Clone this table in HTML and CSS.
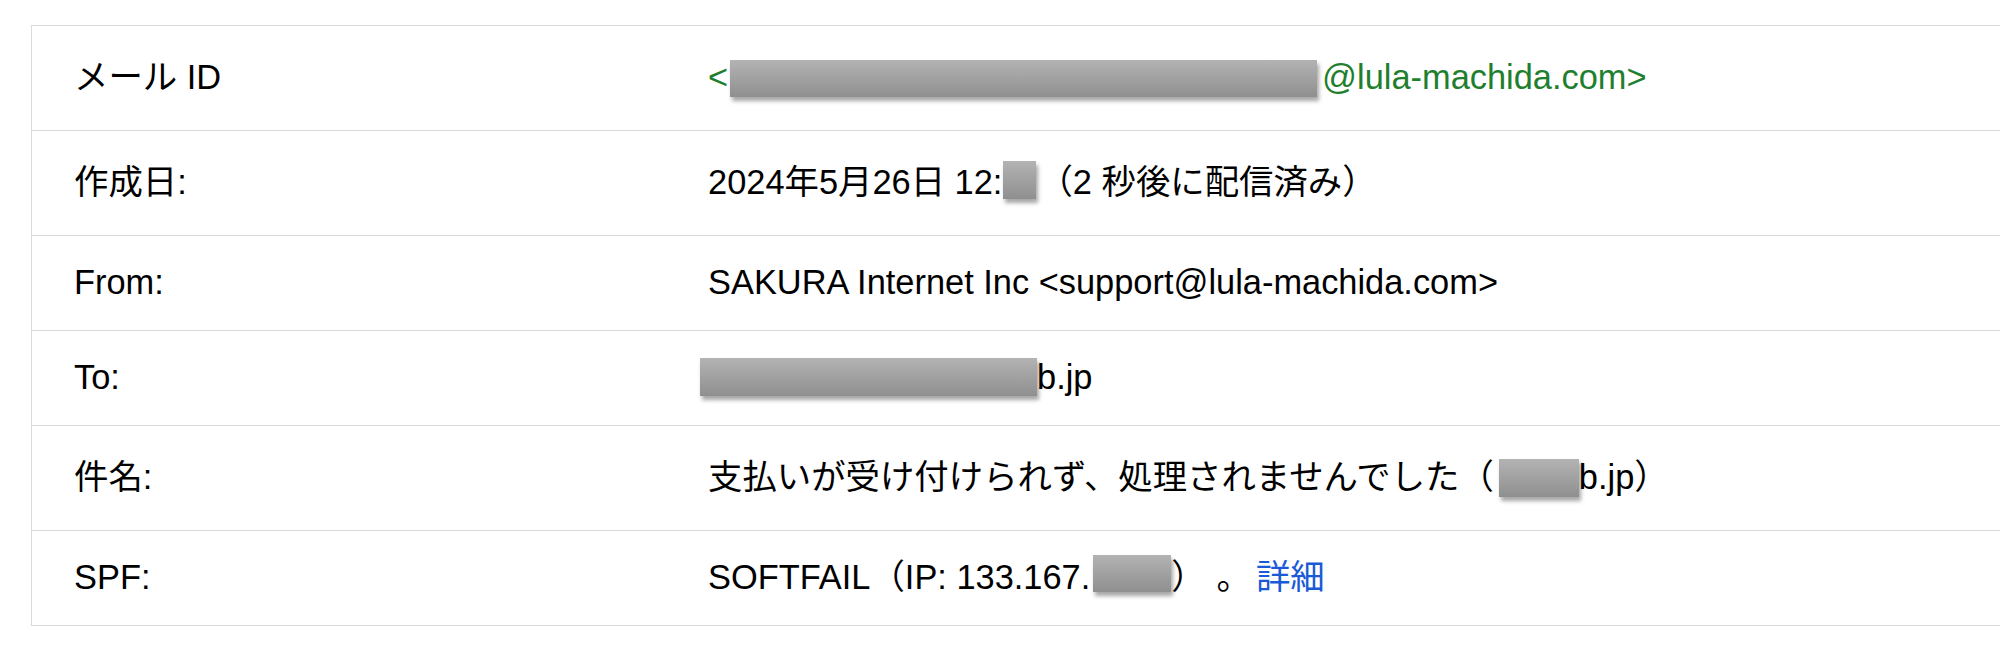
FILE: index.html
```html
<!DOCTYPE html>
<html lang="ja">
<head>
<meta charset="utf-8">
<title>メッセージのソース</title>
<link rel="stylesheet" href="styles.css">
</head>
<body>
<div class="headers">
  <div class="row tall">
    <div class="label">メール ID</div>
    <div class="value msgid">&lt;<span class="redact r-id"></span>@lula-machida.com&gt;</div>
  </div>
  <div class="row tall">
    <div class="label">作成日:</div>
    <div class="value">2024年5月26日 12:<span class="redact r-time"></span>（2 秒後に配信済み）</div>
  </div>
  <div class="row">
    <div class="label">From:</div>
    <div class="value">SAKURA Internet Inc &lt;support@lula-machida.com&gt;</div>
  </div>
  <div class="row">
    <div class="label">To:</div>
    <div class="value"><span class="redact r-to"></span>b.jp</div>
  </div>
  <div class="row tall">
    <div class="label">件名:</div>
    <div class="value">支払いが受け付けられず、処理されませんでした（<span class="redact r-subj"></span>b.jp）</div>
  </div>
  <div class="row">
    <div class="label">SPF:</div>
    <div class="value">SOFTFAIL（IP: 133.167.<span class="redact r-ip"></span>）<span class="stop">。</span><a class="more" href="#">詳細</a></div>
  </div>
</div>
</body>
</html>
```

FILE: styles.css
```css
html, body {
  margin: 0;
  padding: 0;
  background: #ffffff;
  overflow: hidden;
}

body {
  font-family: "Liberation Sans", Arial, "Noto Sans CJK JP", sans-serif;
  font-size: 34.4px;
  color: #000000;
}

.headers {
  margin: 25px 0 0 31px;
  width: 2100px;
  border-top: 1px solid #dadada;
  border-left: 1px solid #dadada;
}

.row {
  display: grid;
  grid-template-columns: 676px 1fr;
  border-bottom: 1px solid #dadada;
  line-height: 39px;
}

.row.tall {
  line-height: 49px;
}

.label,
.value {
  padding: 27px 0 28px 0;
  white-space: nowrap;
}

.label {
  padding-left: 42px;
}

.msgid {
  color: #1f7f2e;
}

.stop {
  margin-left: 28px;
}

.more {
  color: #1a5ad8;
  text-decoration: none;
  margin-left: 5px;
}

.redact {
  display: inline-block;
  height: 38px;
  margin-top: -12px;
  background: linear-gradient(#b3b3b3, #8f8f8f);
  box-shadow: 2px 4px 4px rgba(0, 0, 0, 0.35);
}

.r-id {
  width: 587px;
  height: 37px;
  margin-left: 2px;
  margin-right: 5px;
  vertical-align: -8px;
}

.r-time {
  width: 33px;
  margin-left: 1px;
  margin-right: 2px;
  vertical-align: -5px;
}

.r-to {
  width: 337px;
  margin-left: -8px;
  vertical-align: -7px;
}

.r-subj {
  width: 80px;
  margin-left: 5px;
  vertical-align: -8px;
}

.r-ip {
  width: 78px;
  height: 37px;
  margin-left: 3px;
  vertical-align: -3px;
}
```
